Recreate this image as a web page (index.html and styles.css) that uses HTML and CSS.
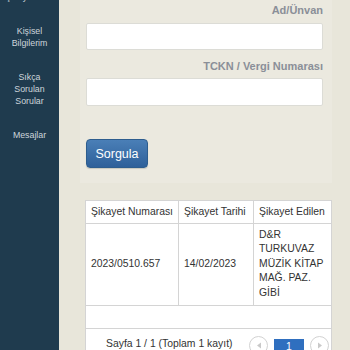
FILE: index.html
```html
<!DOCTYPE html>
<html lang="tr">
<head>
<meta charset="utf-8">
<link rel="stylesheet" href="styles.css">
</head>
<body>
<div class="page">
  <nav class="sidebar">
    <div class="nav-item nav-first">Şikayetlerim</div>
    <div class="nav-item">Kişisel<br>Bilgilerim</div>
    <div class="nav-item">Sıkça<br>Sorulan<br>Sorular</div>
    <div class="nav-item">Mesajlar</div>
  </nav>
  <main class="main">
    <section class="panel">
      <label class="field-label label-first">Ad/Ünvan</label>
      <input class="field field-first" type="text">
      <label class="field-label label-second">TCKN / Vergi Numarası</label>
      <input class="field field-second" type="text">
      <button class="btn">Sorgula</button>
    </section>
    <section class="results">
      <table class="grid">
        <thead>
          <tr>
            <th class="c1">Şikayet Numarası</th>
            <th class="c2">Şikayet Tarihi</th>
            <th class="c3">Şikayet Edilen</th>
          </tr>
        </thead>
        <tbody>
          <tr>
            <td>2023/0510.657</td>
            <td>14/02/2023</td>
            <td>D&amp;R TURKUVAZ MÜZİK KİTAP MAĞ. PAZ. GİBİ</td>
          </tr>
        </tbody>
      </table>
      <div class="empty-row"></div>
      <div class="pager">
        <span class="pager-text">Sayfa 1 / 1 (Toplam 1 kayıt)</span>
        <span class="pager-btns">
          <span class="circle"><svg width="6" height="7" viewBox="0 0 6 7"><path d="M5 0.5 L1 3.5 L5 6.5 Z" fill="#c9c9c9"/></svg></span>
          <span class="page-num">1</span>
          <span class="circle"><svg width="6" height="7" viewBox="0 0 6 7"><path d="M1 0.5 L5 3.5 L1 6.5 Z" fill="#c9c9c9"/></svg></span>
        </span>
      </div>
    </section>
  </main>
</div>
</body>
</html>
```
FILE: styles.css
```css
html, body {
  margin: 0;
  padding: 0;
  height: 100%;
  overflow: hidden;
}
body {
  font-family: "Liberation Sans", Arial, sans-serif;
  background: #e8e6da;
}
.page {
  display: flex;
  height: 350px;
}
.sidebar {
  width: 59px;
  flex: none;
  background: #1f3b4e;
  color: #cdd5db;
  font-size: 8.8px;
  line-height: 12px;
  text-align: center;
  display: flex;
  flex-direction: column;
  gap: 22px;
}
.nav-first {
  margin-top: -9px;
}
.main {
  flex: 1;
  padding-left: 21px;
  padding-right: 18px;
}
.panel {
  background: #ebe9df;
  padding: 3px 9px 15px 6px;
  display: flex;
  flex-direction: column;
}
.field-label {
  display: block;
  text-align: right;
  font-weight: bold;
  font-size: 11px;
  line-height: 14px;
  color: #8a8f98;
}
.label-first {
  margin-bottom: 6px;
}
.label-second {
  margin-top: 9px;
  margin-bottom: 5px;
}
.field {
  box-sizing: border-box;
  width: 100%;
  margin: 0;
  background: #fff;
  border: 1px solid #dcdcd6;
  border-radius: 2px;
}
.field-first { height: 27px; }
.field-second { height: 28px; }
.btn {
  align-self: flex-start;
  margin-top: 33px;
  width: 62px;
  height: 29px;
  border: 1px solid #2d5d8e;
  border-radius: 4px;
  background: linear-gradient(#4a7fb7, #2e609a);
  color: #fff;
  font-family: "Liberation Sans", Arial, sans-serif;
  font-size: 12.5px;
  padding: 0;
  box-shadow: 0 1px 1px rgba(0,0,0,0.15);
}
.results {
  margin-top: 17px;
  margin-left: 5px;
  background: #fff;
  border-left: 1px solid #d4d4d4;
  border-right: 1px solid #d4d4d4;
  color: #333;
  font-size: 10.4px;
}
.grid {
  width: 100%;
  border-collapse: collapse;
  table-layout: fixed;
}
.grid th, .grid td {
  border: 1px solid #d4d4d4;
  text-align: left;
  font-weight: normal;
  padding: 0 5px;
  line-height: 14.4px;
}
.grid tr > :first-child { border-left: none; }
.grid tr > :last-child { border-right: none; }
.grid th {
  height: 22px;
}
.grid td {
  padding-top: 4px;
  padding-bottom: 5px;
}
.c1 { width: 82px; }
.c2 { width: 64px; }
.empty-row {
  height: 22px;
  border-bottom: 1px solid #d4d4d4;
}
.pager {
  display: flex;
  align-items: flex-start;
  justify-content: space-between;
  padding: 0 2px 0 20px;
  height: 30px;
  font-size: 10.4px;
}
.pager-text {
  margin-top: 9px;
  line-height: 12px;
}
.pager-btns {
  display: flex;
  align-items: flex-start;
  gap: 6px;
  margin-top: 7px;
}
.circle {
  box-sizing: border-box;
  width: 19px;
  height: 19px;
  border: 1px solid #d2d2d2;
  border-radius: 50%;
  display: flex;
  align-items: center;
  justify-content: center;
}
.page-num {
  margin-top: 3px;
  width: 30px;
  height: 16px;
  background: #2f6fbf;
  color: #fff;
  text-align: center;
  line-height: 16px;
}
```
